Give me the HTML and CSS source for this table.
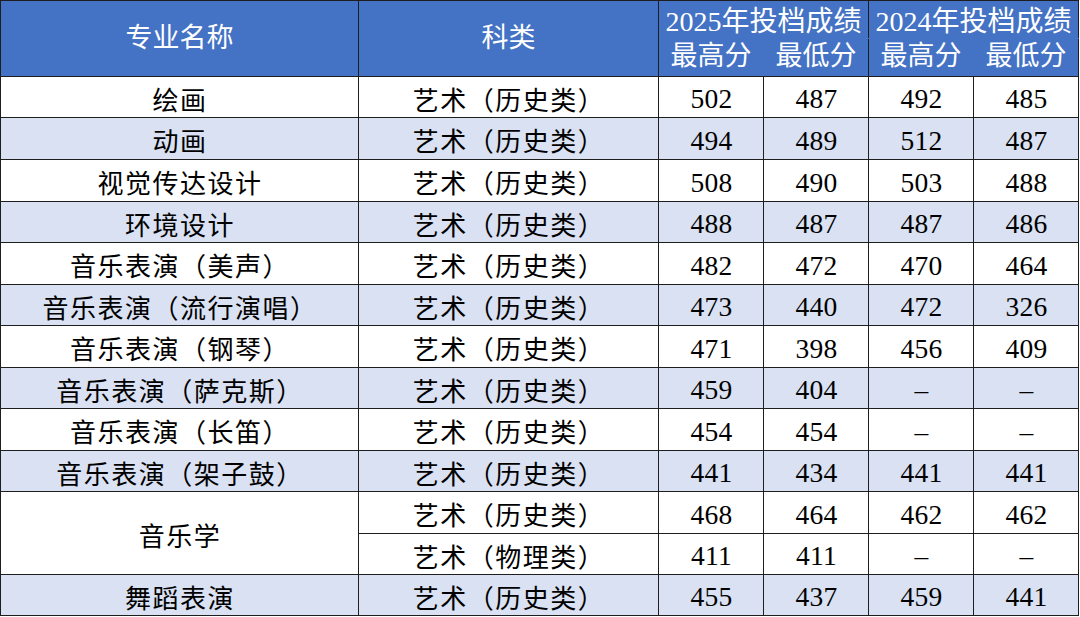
FILE: index.html
```html
<!DOCTYPE html>
<html lang="zh-CN">
<head>
<meta charset="utf-8">
<title>投档成绩</title>
<link rel="stylesheet" href="styles.css">
</head>
<body>
<table class="score-table">
  <colgroup>
    <col class="c-name">
    <col class="c-type">
    <col class="c-num">
    <col class="c-num">
    <col class="c-num">
    <col class="c-num">
  </colgroup>
  <thead>
    <tr class="h1">
      <th rowspan="2" class="hx">专业名称</th>
      <th rowspan="2" class="hx">科类</th>
      <th colspan="2" class="hg">2025年投档成绩</th>
      <th colspan="2" class="hg">2024年投档成绩</th>
    </tr>
    <tr class="h2">
      <th class="hl">最高分</th>
      <th class="hr">最低分</th>
      <th class="hl">最高分</th>
      <th class="hr">最低分</th>
    </tr>
  </thead>
  <tbody>
    <tr class="r41"><td>绘画</td><td>艺术（历史类）</td><td class="n">502</td><td class="n">487</td><td class="n">492</td><td class="n">485</td></tr>
    <tr class="r42 alt"><td>动画</td><td>艺术（历史类）</td><td class="n">494</td><td class="n">489</td><td class="n">512</td><td class="n">487</td></tr>
    <tr class="r42"><td>视觉传达设计</td><td>艺术（历史类）</td><td class="n">508</td><td class="n">490</td><td class="n">503</td><td class="n">488</td></tr>
    <tr class="r41 alt"><td>环境设计</td><td>艺术（历史类）</td><td class="n">488</td><td class="n">487</td><td class="n">487</td><td class="n">486</td></tr>
    <tr class="r42"><td>音乐表演（美声）</td><td>艺术（历史类）</td><td class="n">482</td><td class="n">472</td><td class="n">470</td><td class="n">464</td></tr>
    <tr class="r41 alt"><td>音乐表演（流行演唱）</td><td>艺术（历史类）</td><td class="n">473</td><td class="n">440</td><td class="n">472</td><td class="n">326</td></tr>
    <tr class="r42"><td>音乐表演（钢琴）</td><td>艺术（历史类）</td><td class="n">471</td><td class="n">398</td><td class="n">456</td><td class="n">409</td></tr>
    <tr class="r41 alt"><td>音乐表演（萨克斯）</td><td>艺术（历史类）</td><td class="n">459</td><td class="n">404</td><td class="n">–</td><td class="n">–</td></tr>
    <tr class="r42"><td>音乐表演（长笛）</td><td>艺术（历史类）</td><td class="n">454</td><td class="n">454</td><td class="n">–</td><td class="n">–</td></tr>
    <tr class="r41 alt"><td>音乐表演（架子鼓）</td><td>艺术（历史类）</td><td class="n">441</td><td class="n">434</td><td class="n">441</td><td class="n">441</td></tr>
    <tr class="r42"><td rowspan="2">音乐学</td><td>艺术（历史类）</td><td class="n">468</td><td class="n">464</td><td class="n">462</td><td class="n">462</td></tr>
    <tr class="r41"><td>艺术（物理类）</td><td class="n">411</td><td class="n">411</td><td class="n">–</td><td class="n">–</td></tr>
    <tr class="r41 alt"><td>舞蹈表演</td><td>艺术（历史类）</td><td class="n">455</td><td class="n">437</td><td class="n">459</td><td class="n">441</td></tr>
  </tbody>
</table>
</body>
</html>
```

FILE: styles.css
```css
html, body {
  margin: 0;
  padding: 0;
  background: #ffffff;
}

.score-table {
  border-collapse: collapse;
  table-layout: fixed;
  width: 1079px;
  font-family: "Liberation Serif", "Noto Sans CJK SC", serif;
  color: #000;
  text-spacing-trim: space-all;
}

.c-name { width: 358px; }
.c-type { width: 300px; }
.c-num { width: 105px; }

.score-table th,
.score-table td {
  border: 1px solid #1e1e1e;
  padding: 0;
  text-align: center;
  vertical-align: middle;
  white-space: nowrap;
  overflow: hidden;
}

.score-table th {
  background: #4472c4;
  color: #ffffff;
  font-weight: normal;
  font-size: 27px;
  line-height: 1;
}

.h1 { height: 38px; }
.h2 { height: 38px; }

.hg {
  font-size: 28px !important;
  border-bottom-color: #4472c4 !important;
  padding-top: 4px !important;
}

.h2 th {
  padding-bottom: 2px;
}

.hl { border-right-color: #4472c4 !important; }
.hr { border-left-color: #4472c4 !important; }

.score-table td {
  font-family: "Noto Sans CJK SC", serif;
  font-size: 26px;
  line-height: 1;
  letter-spacing: 1.5px;
  padding-top: 3px;
  padding-left: 1px;
}

.score-table td.n {
  font-family: "Liberation Serif", serif;
  font-size: 27.5px;
  letter-spacing: 0.3px;
  padding-top: 4px;
}

.r41 { height: 41px; }
.r42 { height: 42px; }

.alt td { background: #d9e1f2; }
```
